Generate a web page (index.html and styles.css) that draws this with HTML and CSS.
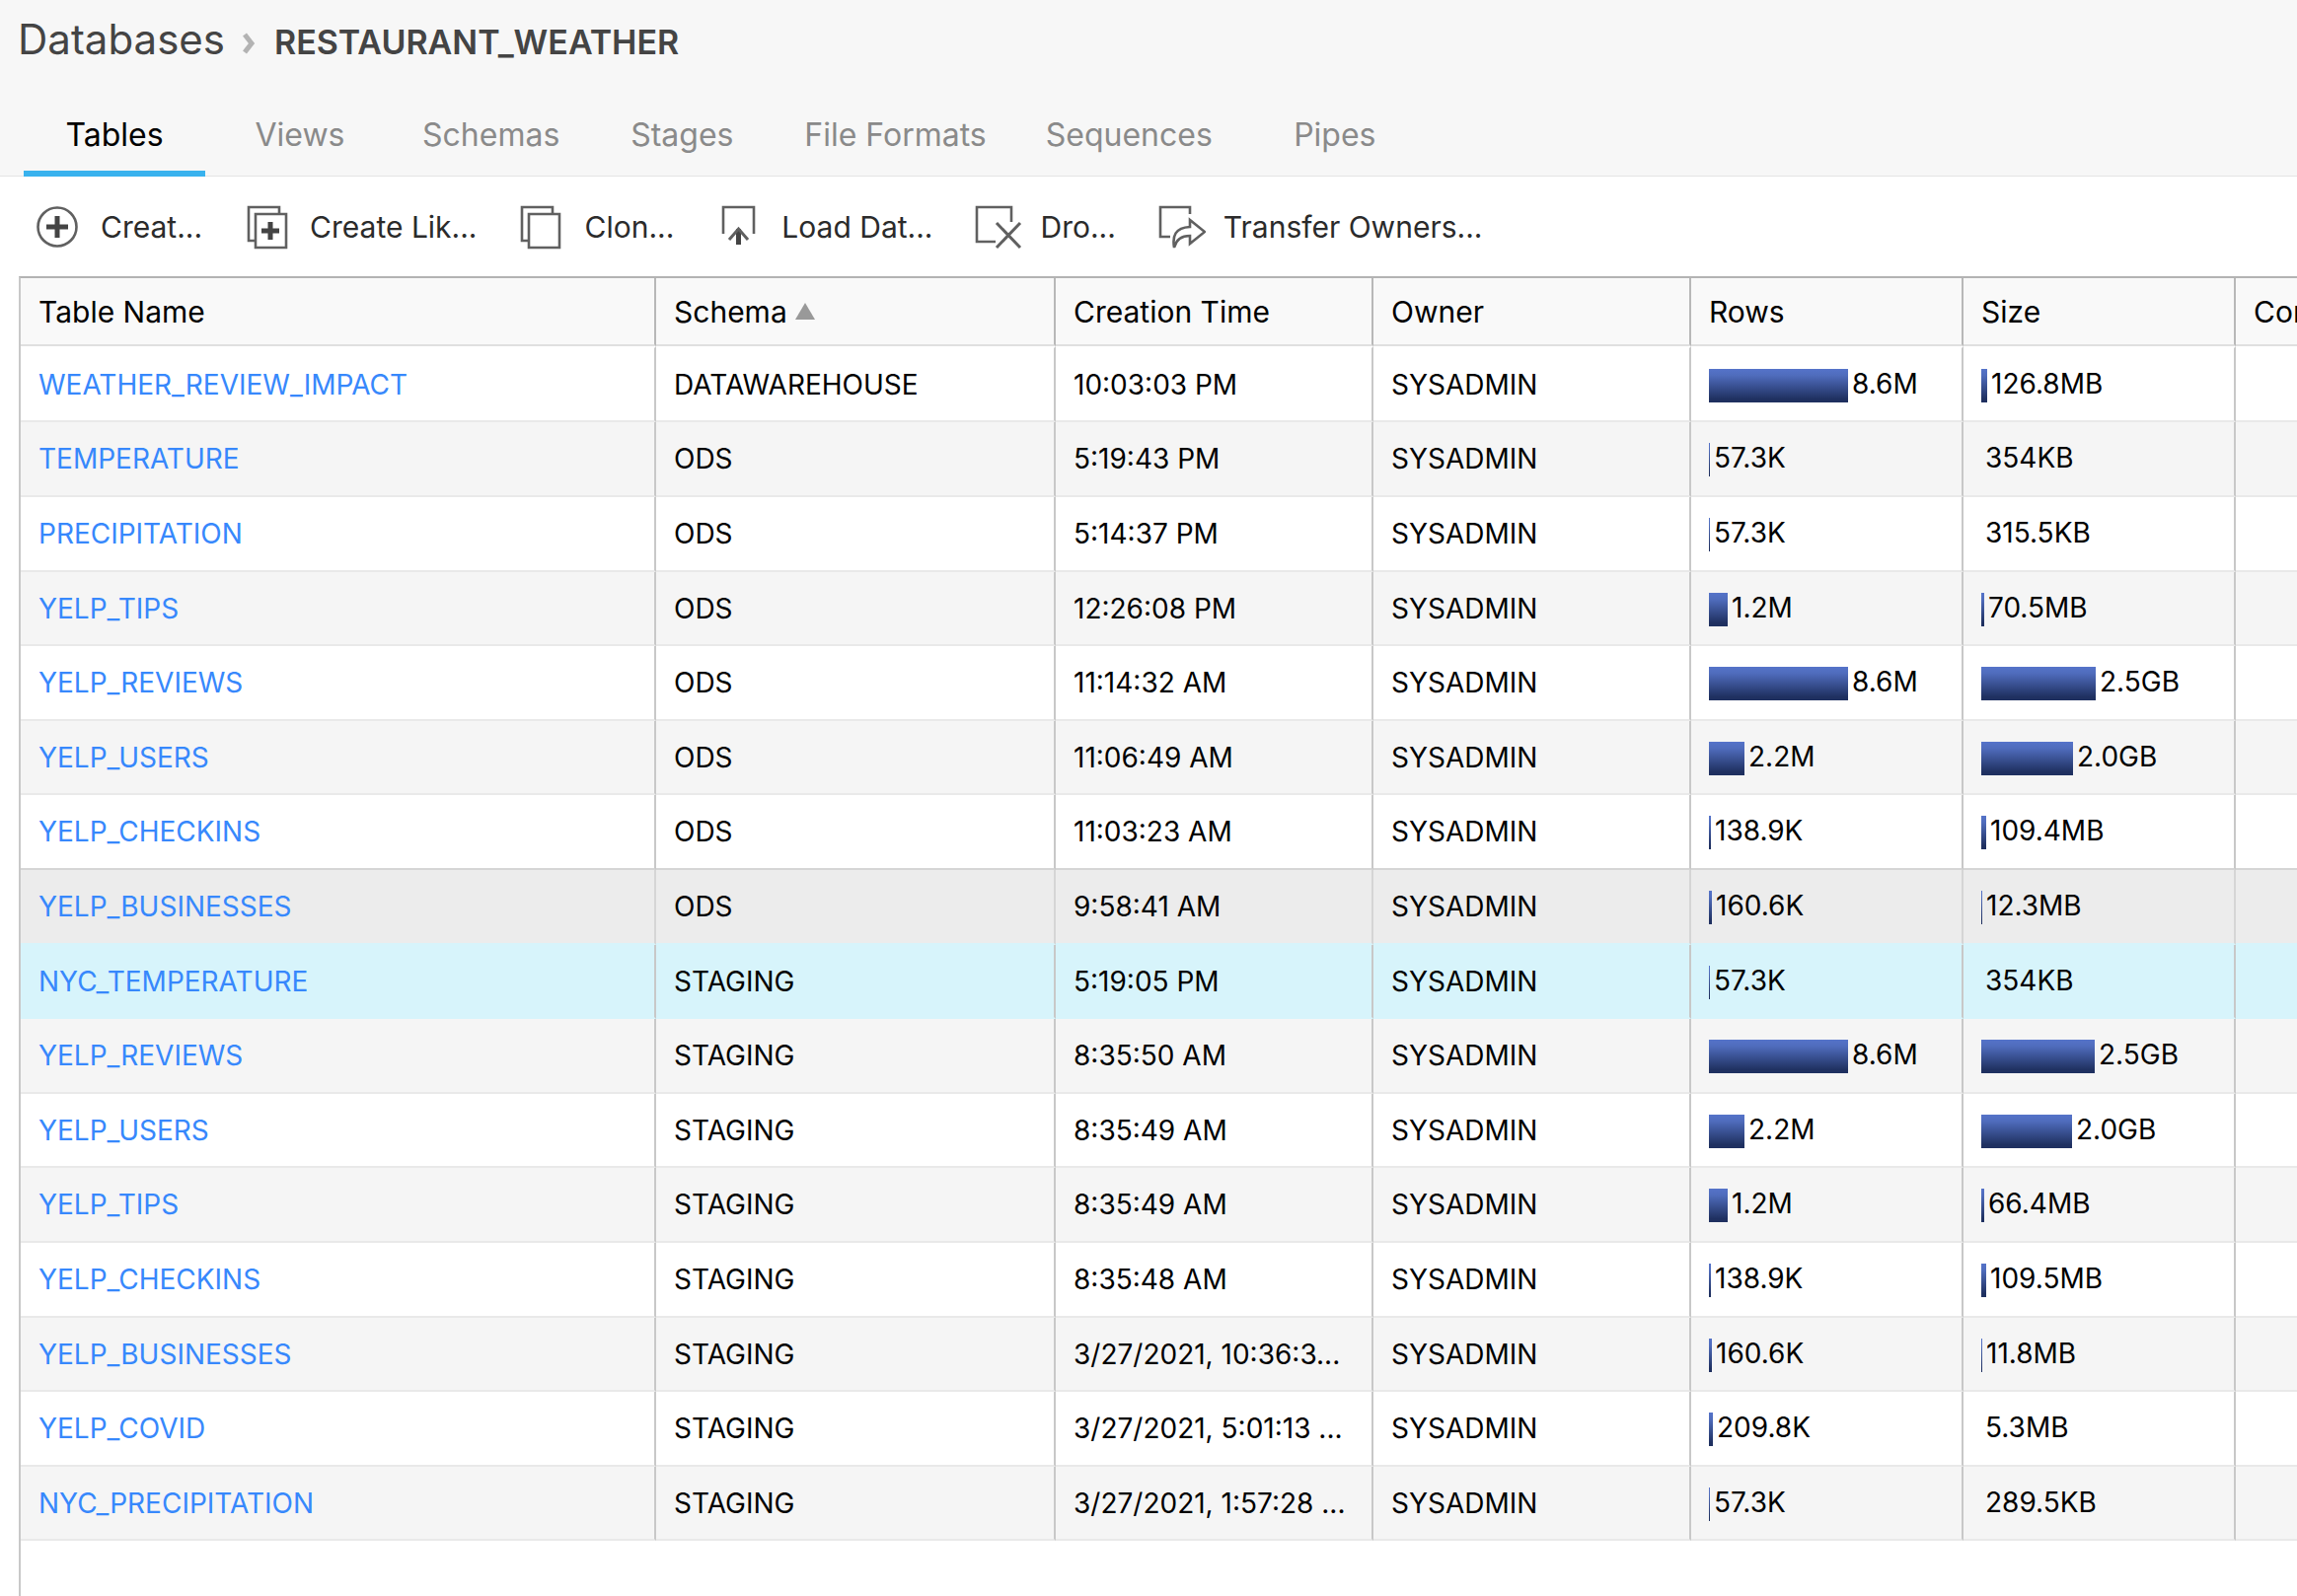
FILE: index.html
```html
<!DOCTYPE html>
<html lang="en">
<head>
<meta charset="utf-8">
<title>RESTAURANT_WEATHER - Databases</title>
<link rel="stylesheet" href="styles.css">
</head>
<body>
<header class="page-header">
  <nav class="breadcrumb" aria-label="Breadcrumb">
    <a class="crumb" href="#databases">Databases</a>
    <svg class="crumb-sep" viewBox="0 0 14 22" aria-hidden="true"><path d="M2 2l7 9-7 9"/></svg>
    <h1 class="crumb-current">RESTAURANT_WEATHER</h1>
  </nav>
  <nav class="tabs" aria-label="Database objects">
    <a class="tab tab-active" href="#tables" aria-current="page">Tables</a>
    <a class="tab" href="#views">Views</a>
    <a class="tab" href="#schemas">Schemas</a>
    <a class="tab" href="#stages">Stages</a>
    <a class="tab" href="#formats">File Formats</a>
    <a class="tab" href="#sequences">Sequences</a>
    <a class="tab" href="#pipes">Pipes</a>
  </nav>
</header>
<main>
  <div class="toolbar" role="toolbar" aria-label="Table actions">
    <button class="tool" type="button"><svg viewBox="0 0 48 48" aria-hidden="true"><circle cx="22" cy="24" r="19.500"/><path class="thick" d="M22 13v22M11 24h22"/></svg><span>Creat...</span></button>
    <button class="tool" type="button"><svg viewBox="0 0 48 48" aria-hidden="true"><path d="M11 38H4V4h31v7M11 11h31v34H11z"/><path class="thick" d="M26 19v18M17 28h18"/></svg><span>Create Lik...</span></button>
    <button class="tool" type="button"><svg viewBox="0 0 48 48" aria-hidden="true"><path d="M9 38H2V4h31v7M9 11h31v34H9z"/></svg><span>Clon...</span></button>
    <button class="tool" type="button"><svg viewBox="0 0 48 48" aria-hidden="true"><path d="M7 31V4h31v27"/><path class="thick" d="M22.500 42V26"/><path class="mid" d="M13 37l9.500-11 9.500 11"/></svg><span>Load Dat...</span></button>
    <button class="tool" type="button"><svg viewBox="0 0 48 48" aria-hidden="true"><path d="M37 19V4H2v35h19"/><path class="mid" d="M22 20l24 25M46 20L22 45"/></svg><span>Dro...</span></button>
    <button class="tool" type="button"><svg viewBox="0 0 48 48" aria-hidden="true"><path d="M32 11V4H2v30h10"/><path d="M16 45c-2-12 1-20 16-21v-7l15 12-15 12v-8c-8 0-14 4-16 12z"/></svg><span>Transfer Owners...</span></button>
  </div>
  <div class="grid-wrap">
    <table class="grid">
      <colgroup><col class="c-name"><col class="c-schema"><col class="c-time"><col class="c-owner"><col class="c-rows"><col class="c-size"><col class="c-comment"></colgroup>
      <thead><tr><th scope="col">Table Name</th><th scope="col" aria-sort="ascending"><span class="sorted">Schema</span></th><th scope="col">Creation Time</th><th scope="col">Owner</th><th scope="col">Rows</th><th scope="col">Size</th><th scope="col">Comment</th></tr></thead>
      <tbody>
        <tr><td><a href="#t1">WEATHER_REVIEW_IMPACT</a></td><td>DATAWAREHOUSE</td><td>10:03:03 PM</td><td>SYSADMIN</td><td><div class="meter"><i style="width:141px"></i>8.6M</div></td><td><div class="meter"><i style="width:6px"></i>126.8MB</div></td><td></td></tr>
        <tr><td><a href="#t2">TEMPERATURE</a></td><td>ODS</td><td>5:19:43 PM</td><td>SYSADMIN</td><td><div class="meter"><i style="width:1px"></i>57.3K</div></td><td><div class="meter"><i style="width:0"></i>354KB</div></td><td></td></tr>
        <tr><td><a href="#t3">PRECIPITATION</a></td><td>ODS</td><td>5:14:37 PM</td><td>SYSADMIN</td><td><div class="meter"><i style="width:1px"></i>57.3K</div></td><td><div class="meter"><i style="width:0"></i>315.5KB</div></td><td></td></tr>
        <tr><td><a href="#t4">YELP_TIPS</a></td><td>ODS</td><td>12:26:08 PM</td><td>SYSADMIN</td><td><div class="meter"><i style="width:19px"></i>1.2M</div></td><td><div class="meter"><i style="width:3px"></i>70.5MB</div></td><td></td></tr>
        <tr><td><a href="#t5">YELP_REVIEWS</a></td><td>ODS</td><td>11:14:32 AM</td><td>SYSADMIN</td><td><div class="meter"><i style="width:141px"></i>8.6M</div></td><td><div class="meter"><i style="width:116px"></i>2.5GB</div></td><td></td></tr>
        <tr><td><a href="#t6">YELP_USERS</a></td><td>ODS</td><td>11:06:49 AM</td><td>SYSADMIN</td><td><div class="meter"><i style="width:36px"></i>2.2M</div></td><td><div class="meter"><i style="width:93px"></i>2.0GB</div></td><td></td></tr>
        <tr><td><a href="#t7">YELP_CHECKINS</a></td><td>ODS</td><td>11:03:23 AM</td><td>SYSADMIN</td><td><div class="meter"><i style="width:2px"></i>138.9K</div></td><td><div class="meter"><i style="width:5px"></i>109.4MB</div></td><td></td></tr>
        <tr class="hovered"><td><a href="#t8">YELP_BUSINESSES</a></td><td>ODS</td><td>9:58:41 AM</td><td>SYSADMIN</td><td><div class="meter"><i style="width:3px"></i>160.6K</div></td><td><div class="meter"><i style="width:1px"></i>12.3MB</div></td><td></td></tr>
        <tr class="selected"><td><a href="#t9">NYC_TEMPERATURE</a></td><td>STAGING</td><td>5:19:05 PM</td><td>SYSADMIN</td><td><div class="meter"><i style="width:1px"></i>57.3K</div></td><td><div class="meter"><i style="width:0"></i>354KB</div></td><td></td></tr>
        <tr><td><a href="#t10">YELP_REVIEWS</a></td><td>STAGING</td><td>8:35:50 AM</td><td>SYSADMIN</td><td><div class="meter"><i style="width:141px"></i>8.6M</div></td><td><div class="meter"><i style="width:115px"></i>2.5GB</div></td><td></td></tr>
        <tr><td><a href="#t11">YELP_USERS</a></td><td>STAGING</td><td>8:35:49 AM</td><td>SYSADMIN</td><td><div class="meter"><i style="width:36px"></i>2.2M</div></td><td><div class="meter"><i style="width:92px"></i>2.0GB</div></td><td></td></tr>
        <tr><td><a href="#t12">YELP_TIPS</a></td><td>STAGING</td><td>8:35:49 AM</td><td>SYSADMIN</td><td><div class="meter"><i style="width:19px"></i>1.2M</div></td><td><div class="meter"><i style="width:3px"></i>66.4MB</div></td><td></td></tr>
        <tr><td><a href="#t13">YELP_CHECKINS</a></td><td>STAGING</td><td>8:35:48 AM</td><td>SYSADMIN</td><td><div class="meter"><i style="width:2px"></i>138.9K</div></td><td><div class="meter"><i style="width:5px"></i>109.5MB</div></td><td></td></tr>
        <tr><td><a href="#t14">YELP_BUSINESSES</a></td><td>STAGING</td><td>3/27/2021, 10:36:3...</td><td>SYSADMIN</td><td><div class="meter"><i style="width:3px"></i>160.6K</div></td><td><div class="meter"><i style="width:1px"></i>11.8MB</div></td><td></td></tr>
        <tr><td><a href="#t15">YELP_COVID</a></td><td>STAGING</td><td>3/27/2021, 5:01:13 ...</td><td>SYSADMIN</td><td><div class="meter"><i style="width:4px"></i>209.8K</div></td><td><div class="meter"><i style="width:0"></i>5.3MB</div></td><td></td></tr>
        <tr><td><a href="#t16">NYC_PRECIPITATION</a></td><td>STAGING</td><td>3/27/2021, 1:57:28 ...</td><td>SYSADMIN</td><td><div class="meter"><i style="width:1px"></i>57.3K</div></td><td><div class="meter"><i style="width:0"></i>289.5KB</div></td><td></td></tr>
      </tbody>
    </table>
  </div>
</main>
</body>
</html>
```

FILE: styles.css
```css
* { box-sizing: border-box; }

body {
  margin: 0;
  min-height: 100vh;
  display: flex;
  flex-direction: column;
  overflow-x: hidden;
  background: #fff;
  color: #000;
  font-family: Inter, "Liberation Sans", sans-serif;
  font-size: 28px;
}

a { color: inherit; text-decoration: none; }

.page-header {
  background: #f7f7f7;
  border-bottom: 1px solid #e4e4e4;
}

.breadcrumb {
  display: flex;
  align-items: baseline;
  height: 80px;
  padding: 14px 0 0 18px;
  color: #444;
}
.crumb { font-size: 42px; }
.crumb-sep {
  width: 14px;
  height: 22px;
  margin: 0 18px 5px 18px;
  fill: none;
  stroke: #b3b3b3;
  stroke-width: 5;
}
.crumb-current { margin: 0; font-size: 34px; font-weight: 600; }

.tabs {
  display: flex;
  gap: 4px;
  height: 99px;
  padding-left: 24px;
  margin-bottom: -1px;
}
.tab {
  display: flex;
  justify-content: center;
  align-items: center;
  min-width: 184px;
  padding: 36px 28px 16px;
  border-bottom: 6px solid transparent;
  color: #8a8a8a;
  font-size: 32px;
}
.tab-active { color: #000; border-color: #39b2ee; }

.toolbar {
  display: flex;
  align-items: center;
  gap: 43px;
  height: 101px;
  padding-left: 36px;
}
.tool {
  display: flex;
  align-items: center;
  gap: 18px;
  padding: 0;
  border: 0;
  background: none;
  color: #2b2b2b;
  font: inherit;
  font-size: 30px;
}
.tool svg {
  width: 48px;
  height: 48px;
  fill: none;
  stroke: #606060;
  stroke-width: 2.6;
}
.tool .mid { stroke-width: 3; }
.tool .thick { stroke: #444; stroke-width: 5; }

main { display: flex; flex-direction: column; flex: 1; }
.grid-wrap {
  flex: 1;
  margin-left: 19px;
  border-top: 2px solid #b3b3b3;
  border-left: 2px solid #c8c8c8;
  overflow: hidden;
}
.grid {
  width: 2600px;
  table-layout: fixed;
  border-collapse: separate;
  border-spacing: 0;
}
.c-name { width: 644px; }
.c-schema { width: 405px; }
.c-time, .c-owner { width: 322px; }
.c-rows, .c-size { width: 276px; }

th, td {
  padding: 0 18px;
  border-right: 2px solid #c8c8c8;
  text-align: left;
  white-space: nowrap;
}
th {
  height: 69px;
  border-right-color: #b8b8b8;
  border-bottom: 2px solid #e0e0e0;
  background: #f9f9f9;
  font-size: 30px;
  font-weight: 400;
}
td { height: 76px; border-bottom: 2px solid #e9e9e9; }
td a { color: #3788fc; }
tr:nth-child(5n + 4) td, tr:nth-child(5n + 1) td { height: 75px; }
tbody tr:first-child td { height: 77px; border-top: 2px solid #fff; }
tbody tr:nth-child(even) { background: #f5f5f5; }
tbody tr:nth-child(7) td { border-bottom-color: #d5d5d5; }
tbody tr.hovered { background: #ececec; }
tbody .hovered td { border-right-color: #d5d5d5; border-bottom-color: #d7f4fb; }
tbody tr.selected { background: #d7f4fb; }
tbody .selected td { border-bottom-color: #d7f4fb; }

.sorted { display: flex; align-items: center; gap: 8px; }
.sorted::after {
  content: "";
  border: 10px solid transparent;
  border-top: 0;
  border-bottom: 17px solid #999;
}

.meter { display: flex; gap: 4px; padding-top: 2px; line-height: 30px; }
.meter i {
  height: 34px;
  background: linear-gradient(#5573c9, #4f6cbc 20%, #1f3060 90%);
}
```
